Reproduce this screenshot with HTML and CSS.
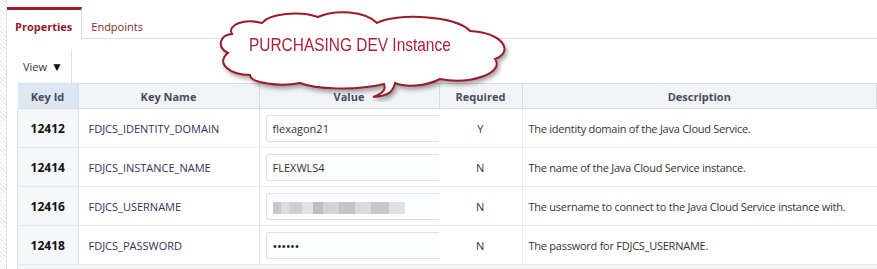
FILE: index.html
```html
<!DOCTYPE html>
<html lang="en">
<head>
  <meta charset="UTF-8" />
  <title>Properties</title>
  <link rel="stylesheet" href="styles.css">
</head>
<body>
  <div class="page">
    <div class="gutter"></div>
    <div class="main">
      <div class="tabs">
        <div class="tab active">Properties</div>
        <div class="tab">Endpoints</div>
      </div>

      <div class="content">
        <div class="toolbar">
          <div class="view-btn">View <span class="caret">&#9660;</span></div>
        </div>

        <table class="props">
          <thead>
            <tr>
              <th class="col-id sorted">Key Id</th>
              <th class="col-name">Key Name</th>
              <th class="col-value">Value</th>
              <th class="col-req">Required</th>
              <th class="col-desc">Description</th>
            </tr>
          </thead>
          <tbody>
            <tr>
              <td class="key-id">12412</td>
              <td class="key-name">FDJCS_IDENTITY_DOMAIN</td>
              <td class="value"><div class="input">flexagon21</div></td>
              <td class="req">Y</td>
              <td class="desc">The identity domain of the Java Cloud Service.</td>
            </tr>
            <tr>
              <td class="key-id">12414</td>
              <td class="key-name">FDJCS_INSTANCE_NAME</td>
              <td class="value"><div class="input">FLEXWLS4</div></td>
              <td class="req">N</td>
              <td class="desc">The name of the Java Cloud Service instance.</td>
            </tr>
            <tr>
              <td class="key-id">12416</td>
              <td class="key-name">FDJCS_USERNAME</td>
              <td class="value"><div class="input"><span class="blurred"></span></div></td>
              <td class="req">N</td>
              <td class="desc">The username to connect to the Java Cloud Service instance with.</td>
            </tr>
            <tr>
              <td class="key-id">12418</td>
              <td class="key-name">FDJCS_PASSWORD</td>
              <td class="value"><div class="input dots">&#8226;&#8226;&#8226;&#8226;&#8226;&#8226;</div></td>
              <td class="req">N</td>
              <td class="desc">The password for FDJCS_USERNAME.</td>
            </tr>
          </tbody>
        </table>
        <div class="table-footer"></div>
      </div>
    </div>
  </div>

  <!-- callout drawn over the page -->
  <div class="callout">
    <svg width="304" height="96" viewBox="212 6 304 96">
      <path class="cloud" d="M 232,34
        C 227,25 244,18 262,23
        C 270,13 300,11 318,17
        C 335,9 365,11 377,23
        C 395,13 455,15 470,31
        C 502,33 515,51 495,59
        C 505,73 470,85 440,79
        C 425,87 405,87 395,83
        C 393,91 390,96 373,97
        C 384,93 386,89 384,84
        C 355,91 315,89 300,83
        C 280,87 250,83 250,75
        C 230,75 215,63 228,53
        C 216,47 220,35 232,34 Z" />
    </svg>
    <span class="callout-text">PURCHASING DEV Instance</span>
  </div>
</body>
</html>
```

FILE: styles.css
```css
body {
  margin: 0;
  padding: 0;
  font-family: "Open Sans", "Noto Sans", sans-serif;
  font-size: 11px;
  color: #333;
  background: #fff;
  overflow: hidden;
}
.page {
  display: flex;
  height: 269px;
}
.gutter {
  width: 6px;
  background: repeating-linear-gradient(45deg, #ececec 0 1px, #fff 1px 3px);
}
.main {
  flex: 1;
  border-left: 1px solid #e1e4e8;
  min-width: 0;
}

/* tabs */
.tabs {
  display: flex;
  height: 39px;
  padding-top: 7px;
  box-sizing: border-box;
  border-bottom: 1px solid #d6dde6;
}
.tab {
  height: 33px;
  padding: 0 9px 0 9px;
  color: #7d2a2a;
  box-sizing: border-box;
  border-top: 3px solid transparent;
  line-height: 33px;
}
.tab.active {
  background: #fff;
  padding-left: 8px;
  border-top-color: #9a1f2b;
  border-right: 1px solid #d6dde6;
  font-weight: bold;
  color: #8e2233;
}

/* toolbar + table */
.content {
  padding-left: 10px;
}
.toolbar {
  display: flex;
  padding-top: 10px;
}
.view-btn {
  height: 34px;
  line-height: 35px;
  padding: 0 8px 0 6px;
  border-right: 1px solid #dde2e8;
  color: #333;
}
.caret {
  font-size: 12px;
  margin-left: 1px;
  color: #111;
}
.props {
  width: 100%;
  border-collapse: collapse;
  table-layout: fixed;
}
.props th {
  height: 24px;
  padding: 0;
  background: #f1f3f7;
  color: #4a4a5a;
  font-weight: bold;
  text-align: center;
  border: 1px solid #d6dde6;
  border-left: none;
}
.props th.sorted {
  background: #dce7f3;
}
.col-id { width: 60px; }
.col-name { width: 180px; }
.col-value { width: 179px; }
.col-req { width: 82px; }
.props td {
  height: 38px;
  padding: 0;
  border-bottom: 1px solid #e6e9ee;
  border-right: 1px solid #e6e9ee;
}
.key-id {
  background: #f5f7fb;
  font-weight: bold;
  font-size: 12px;
  color: #111;
  text-align: center;
  border-left: 1px solid #dde3ea;
}
.props td.key-id {
  border-right-color: #dde3ea;
}
.key-name {
  padding-left: 10px !important;
  color: #3d2d55;
}
.props td.value {
  padding-left: 6px;
  border-right: none;
}
.input {
  height: 27px;
  line-height: 26px;
  box-sizing: border-box;
  padding-left: 6px;
  border: 1px solid #dde0e5;
  border-right: none;
  border-radius: 3px 0 0 3px;
  background: #fcfdff;
  color: #333;
}
.input.dots {
  font-size: 13px;
  letter-spacing: -0.5px;
  color: #222;
}
.blurred {
  display: inline-block;
  width: 132px;
  height: 12px;
  vertical-align: middle;
  background: linear-gradient(90deg, #c9c9cb 0 6%, #dcdcde 6% 12%, #cfcfd1 12% 22%, #e2e2e4 22% 30%,
    #bdbdc0 30% 38%, #d4d4d6 38% 50%, #c4c4c7 50% 62%, #dadadc 62% 74%, #c7c7ca 74% 88%, #e0e0e2 88% 100%);
}
.req {
  text-align: center;
  color: #333;
}
.props td.desc {
  padding-left: 6px;
  letter-spacing: -0.25px;
  border-right: none;
}
.table-footer {
  height: 6px;
  background: #f3f4f8;
  border-left: 1px solid #dde3ea;
}

/* callout */
.callout {
  position: absolute;
  left: 212px;
  top: 6px;
  width: 304px;
  height: 96px;
}
.callout svg {
  display: block;
}
.cloud {
  fill: #fff;
  stroke: #9c1b2b;
  stroke-width: 2;
  filter: drop-shadow(2px 3px 2px rgba(0, 0, 0, 0.35));
}
.callout-text {
  position: absolute;
  left: 37px;
  top: 28px;
  font-family: "Liberation Sans", Arial, sans-serif;
  font-size: 18.5px;
  color: #ad2236;
  white-space: nowrap;
  transform: scaleX(0.835);
  transform-origin: left center;
}
```
